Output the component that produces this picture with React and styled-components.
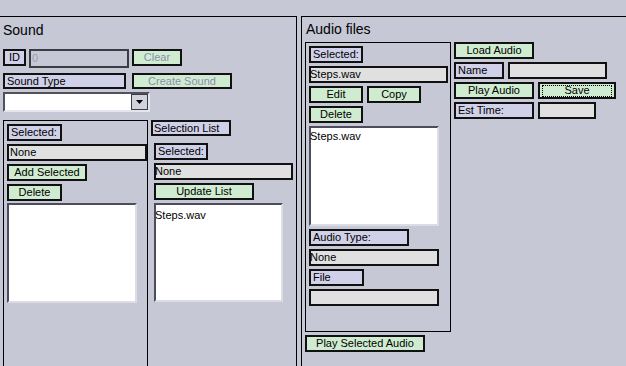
import React from "react"
import styled, { createGlobalStyle } from "styled-components"

const GlobalStyle = createGlobalStyle`
  html, body {
    margin: 0;
    padding: 0;
    background: #c6c8d5;
    overflow: hidden;
  }
  body {
    font-family: "Liberation Sans", Arial, sans-serif;
    font-size: 11px;
    color: #000;
  }
  * {
    box-sizing: border-box;
  }
`

const Frame = styled.div`
  display: flex;
  align-items: flex-start;
  gap: 4px;
  width: 626px;
  height: 366px;
  padding-top: 16px;
  overflow: hidden;
`

const Panel = styled.section`
  flex-shrink: 0;
  height: 400px;
  border: 1px solid #000;
`

const SoundPanel = styled(Panel)`
  width: 298px;
  margin-left: -1px;
  padding: 5px 0 0 3px;
`

const AudioPanel = styled(Panel)`
  width: 400px;
  padding: 4px 0 0 3px;
`

const Title = styled.h2`
  margin: 0 0 ${(p) => p.$mb}px ${(p) => p.$ml || 0}px;
  height: 16px;
  font-size: 14px;
  line-height: 16px;
  font-weight: normal;
`

const Row = styled.div`
  display: flex;
  align-items: flex-start;
  gap: ${(p) => p.$gap || 0}px;
  margin-top: ${(p) => p.$mt || 0}px;
`

const Stack = styled.div`
  display: flex;
  flex-direction: column;
  align-items: flex-start;
  gap: ${(p) => (p.$gap === undefined ? 3 : p.$gap)}px;
  margin-top: ${(p) => p.$mt || 0}px;
  margin-left: ${(p) => p.$ml || 0}px;
`

const Box = styled.div`
  flex-shrink: 0;
  width: ${(p) => p.$w}px;
  height: ${(p) => p.$h || 17}px;
  border: 2px solid #111;
  font-size: 11px;
  line-height: ${(p) => (p.$h || 17) - 4}px;
  white-space: nowrap;
  overflow: hidden;
`

const Label = styled(Box)`
  background: #d0d0e8;
  padding-left: ${(p) => (p.$pad === undefined ? 2 : p.$pad)}px;
`

const Field = styled(Box)`
  background: #e0e0e0;
  text-indent: ${(p) => p.$indent || -1}px;
`

const DisabledField = styled(Box)`
  background: #c6c8d5;
  border-color: #3c3c44;
  color: #9a9cb8;
  padding-left: 1px;
  line-height: 15px;
`

const Button = styled.button`
  position: relative;
  flex-shrink: 0;
  width: ${(p) => p.$w}px;
  height: ${(p) => p.$h || 17}px;
  padding: 0;
  border: 2px solid #111;
  border-radius: 0;
  background: #d0ecd0;
  color: ${(p) => (p.disabled ? "#8a8cb0" : "#000")};
  font-family: inherit;
  font-size: 11px;
  line-height: ${(p) => (p.$h || 17) - 4}px;
  text-align: center;
  white-space: nowrap;
  &::after {
    content: "";
    display: ${(p) => (p.$focused ? "block" : "none")};
    position: absolute;
    inset: 1px 2px 0 2px;
    border: 1px dotted #000;
  }
`

const Combo = styled.div`
  display: flex;
  justify-content: flex-end;
  width: 147px;
  height: 20px;
  margin-top: 3px;
  background: #fff;
  border-style: solid;
  border-width: 2px;
  border-color: #50505e #e4e4ec #e4e4ec #50505e;
`

const ComboArrow = styled.div`
  display: flex;
  align-items: center;
  justify-content: center;
  width: 17px;
  background: #d2d2da;
  border: 1px solid #3c3c46;
`

const List = styled.div`
  flex-shrink: 0;
  width: ${(p) => p.$w}px;
  height: ${(p) => p.$h}px;
  margin-top: ${(p) => p.$mt || 0}px;
  padding-top: ${(p) => p.$pt || 2}px;
  background: #fff;
  border-style: solid;
  border-width: 2px;
  border-color: #4c4c5c #dcdce6 #dcdce6 #4c4c5c;
  font-size: 11px;
  line-height: 13px;
  text-indent: -1px;
`

const Split = styled.div`
  display: flex;
  margin-top: 8px;
`

const SubPanel = styled.div`
  flex-shrink: 0;
  width: ${(p) => p.$w}px;
  height: ${(p) => p.$h}px;
  border: 1px solid #000;
  border-bottom-width: ${(p) => (p.$open ? 0 : 1)}px;
  padding: 3px 0 0 3px;
`

const SideSection = styled.div`
  width: 148px;
  padding-left: 3px;
`

const AudioBody = styled.div`
  display: flex;
  align-items: flex-start;
  gap: 3px;
`

const Column = styled.div`
  display: flex;
  flex-direction: column;
  align-items: flex-start;
  gap: 3px;
`

const Arrow = () => (
  <svg width="7" height="4" viewBox="0 0 7 4">
    <polygon points="0,0 7,0 3.5,4" fill="#000" />
  </svg>
)

const App = () => {
  return (
    <>
      <GlobalStyle />
      <Frame>
        <SoundPanel>
          <Title $mb={11}>Sound</Title>
          <Row $gap={3}>
            <Label $w={23} $pad={4}>ID</Label>
            <DisabledField $w={100} $h={19}>0</DisabledField>
            <Button $w={50} disabled>
              Clear
            </Button>
          </Row>
          <Row $gap={6} $mt={5}>
            <Label $w={123} $h={16}>Sound Type</Label>
            <Button $w={100} $h={16} disabled>
              Create Sound
            </Button>
          </Row>
          <Combo>
            <ComboArrow>
              <Arrow />
            </ComboArrow>
          </Combo>
          <Split>
            <SubPanel $w={145} $h={260} $open>
              <Stack>
                <Label $w={55}>Selected:</Label>
                <Field $w={140} $indent={1}>None</Field>
                <Button $w={80}>Add Selected</Button>
                <Button $w={55}>Delete</Button>
                <List $w={130} $h={100} $mt={-1} />
              </Stack>
            </SubPanel>
            <SideSection>
              <Label $w={80} $h={16} $pad={1}>Selection List</Label>
              <Stack $mt={7} $ml={3}>
                <Label $w={54}>Selected:</Label>
                <Field $w={139}>None</Field>
                <Button $w={100}>Update List</Button>
                <List $w={129} $h={99} $pt={4}>
                  Steps.wav
                </List>
              </Stack>
            </SideSection>
          </Split>
        </SoundPanel>

        <AudioPanel>
          <Title $mb={5} $ml={1}>Audio files</Title>
          <AudioBody>
            <Column>
              <SubPanel $w={146} $h={290}>
                <Stack>
                  <Label $w={54}>Selected:</Label>
                  <Field $w={139}>Steps.wav</Field>
                  <Row $gap={4}>
                    <Button $w={54}>Edit</Button>
                    <Button $w={54}>Copy</Button>
                  </Row>
                  <Button $w={54}>Delete</Button>
                  <List $w={130} $h={100} $pt={2}>
                    Steps.wav
                  </List>
                  <Label $w={100}>Audio Type:</Label>
                  <Field $w={130}>None</Field>
                  <Label $w={55}>File</Label>
                  <Field $w={130} />
                </Stack>
              </SubPanel>
              <Button $w={120}>Play Selected Audio</Button>
            </Column>
            <Column>
              <Button $w={80}>Load Audio</Button>
              <Row $gap={4}>
                <Label $w={50}>Name</Label>
                <Field $w={99} />
              </Row>
              <Row $gap={4}>
                <Button $w={80}>Play Audio</Button>
                <Button $w={78} $focused>
                  Save
                </Button>
              </Row>
              <Row $gap={4}>
                <Label $w={80}>Est Time:</Label>
                <Field $w={58} />
              </Row>
            </Column>
          </AudioBody>
        </AudioPanel>
      </Frame>
    </>
  )
}

export default App
